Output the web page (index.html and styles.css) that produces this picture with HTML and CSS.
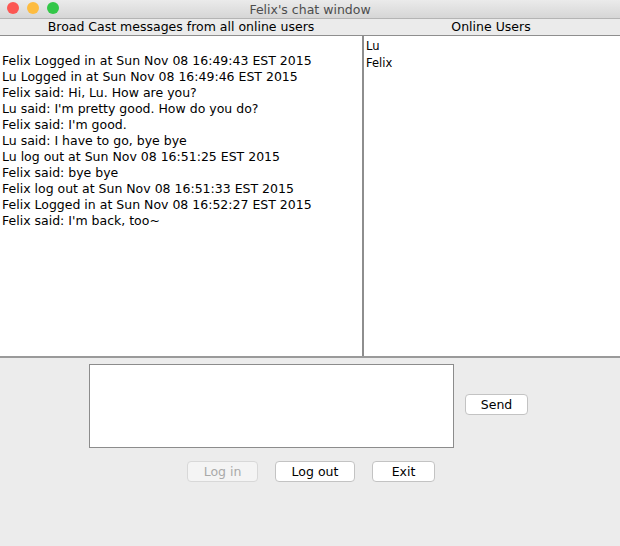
FILE: index.html
```html
<!DOCTYPE html>
<html>
<head>
<meta charset="utf-8">
<link rel="stylesheet" href="styles.css">
</head>
<body>
<div class="window">
  <div class="titlebar">
    <div class="lights">
      <span class="light red"></span>
      <span class="light yellow"></span>
      <span class="light green"></span>
    </div>
    <div class="title">Felix's chat window</div>
  </div>
  <div class="panes">
    <div class="header left-h">Broad Cast messages from all online users</div>
    <div class="header right-h">Online Users</div>
    <div class="pane messages">
      <div class="line">&nbsp;</div>
      <div class="line">Felix Logged in at Sun Nov 08 16:49:43 EST 2015</div>
      <div class="line">Lu Logged in at Sun Nov 08 16:49:46 EST 2015</div>
      <div class="line">Felix said: Hi, Lu. How are you?</div>
      <div class="line">Lu said: I'm pretty good. How do you do?</div>
      <div class="line">Felix said: I'm good.</div>
      <div class="line">Lu said: I have to go, bye bye</div>
      <div class="line">Lu log out at Sun Nov 08 16:51:25 EST 2015</div>
      <div class="line">Felix said: bye bye</div>
      <div class="line">Felix log out at Sun Nov 08 16:51:33 EST 2015</div>
      <div class="line">Felix Logged in at Sun Nov 08 16:52:27 EST 2015</div>
      <div class="line">Felix said: I'm back, too~</div>
    </div>
    <div class="pane users">
      <div class="user">Lu</div>
      <div class="user">Felix</div>
    </div>
  </div>
  <div class="compose">
    <div class="input"></div>
    <button class="btn send">Send</button>
  </div>
  <div class="actions">
    <button class="btn login" disabled>Log in</button>
    <button class="btn logout">Log out</button>
    <button class="btn exit">Exit</button>
  </div>
</div>
</body>
</html>
```

FILE: styles.css
```css
html, body {
  margin: 0;
  padding: 0;
}
body {
  width: 620px;
  height: 546px;
  background: #ececec;
  font-family: "DejaVu Sans", "Liberation Sans", sans-serif;
  color: #000;
  overflow: hidden;
}
.window {
  width: 620px;
  height: 546px;
  display: flex;
  flex-direction: column;
}
.titlebar {
  height: 18px;
  position: relative;
  background: linear-gradient(#ebebeb, #d6d6d6);
  border-bottom: 1px solid #b4b4b4;
  display: flex;
  align-items: center;
  justify-content: center;
}
.lights {
  position: absolute;
  left: 7px;
  top: 2px;
  display: flex;
  gap: 8px;
}
.light {
  width: 12px;
  height: 12px;
  border-radius: 50%;
  display: block;
}
.red { background: #fc5753; }
.yellow { background: #fdbc40; }
.green { background: #33c748; }
.title {
  font-size: 12.5px;
  color: #4d4d4d;
}
.panes {
  display: grid;
  grid-template-columns: 362px 258px;
  grid-template-rows: 17px 320px;
  border-bottom: 2px solid #9a9a9a;
}
.header {
  background: #ebebeb;
  border-bottom: 1px solid #8e8e8e;
  font-size: 12.5px;
  text-align: center;
  line-height: 16px;
}
.pane {
  background: #fff;
}
.messages {
  padding-left: 2px;
  padding-top: 1px;
  font-size: 12.5px;
  line-height: 16px;
}
.users {
  border-left: 2px solid #8e8e8e;
  padding-left: 2px;
  padding-top: 2px;
  font-size: 11.5px;
  line-height: 17px;
}
.compose {
  display: flex;
  align-items: center;
  gap: 11px;
  padding-top: 6px;
  padding-left: 89px;
}
.input {
  width: 363px;
  height: 82px;
  background: #fff;
  border: 1px solid #8c8c8c;
}
.btn {
  font-family: "DejaVu Sans", "Liberation Sans", sans-serif;
  font-size: 12.5px;
  background: #fff;
  border: 1px solid #c3c3c3;
  border-radius: 4px;
  height: 21px;
  padding: 0;
  color: #000;
  line-height: 19px;
}
.send { width: 63px; margin-bottom: 3px; }
.actions {
  display: flex;
  justify-content: center;
  gap: 17px;
  padding-top: 13px;
  padding-left: 2px;
}
.login { width: 71px; color: #a9a9a9; border-color: #d8d8d8; background: #f4f4f4; }
.logout { width: 80px; }
.exit { width: 63px; }
```
